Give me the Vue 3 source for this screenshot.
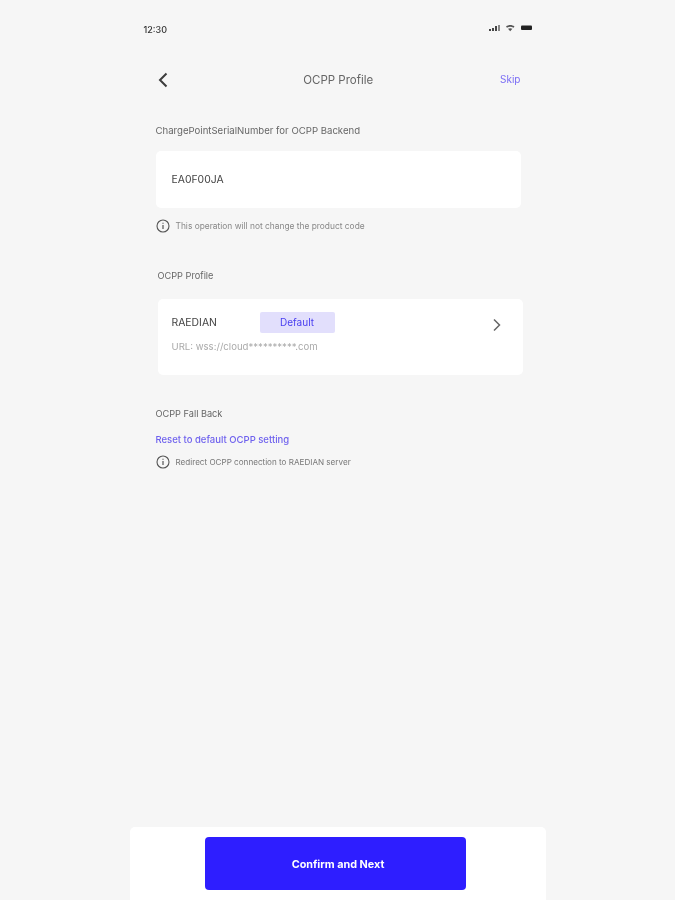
<template>
  <div class="page">
    <div class="screen">
      <div class="status">
        <span class="time">12:30</span>
        <svg class="status-icons" width="44" height="8" viewBox="0 0 44 8">
          <rect x="0" y="5" width="2" height="2" fill="#444" />
          <rect x="3" y="4" width="2" height="3" fill="#444" />
          <rect x="6" y="2" width="2" height="5" fill="#444" />
          <rect x="9" y="1" width="2" height="6" fill="#888" />
          <path d="M17 2.600c2.600-2 5.900-2 8.500 0l-1 1.200c-2-1.400-4.500-1.400-6.500 0zM19 4.800c1.400-.9 3-.9 4.400 0l-2.200 2.500z" fill="#555" />
          <rect x="32" y="1.500" width="11" height="4.500" rx="1" fill="#222" />
        </svg>
      </div>

      <div class="header">
        <svg class="back" width="12" height="18" viewBox="0 0 12 18">
          <path d="M9.500 2.500 3 9l6.500 6.500" fill="none" stroke="#3c3c3c" stroke-width="2" />
        </svg>
        <span class="title">OCPP Profile</span>
        <span class="skip">Skip</span>
      </div>

      <div class="label first-label">ChargePointSerialNumber for OCPP Backend</div>
      <div class="card serial">EA0F00JA</div>
      <div class="hint">
        <svg class="info" width="14" height="14" viewBox="0 0 14 14">
          <circle cx="7" cy="7" r="6" fill="none" stroke="#555" stroke-width="1.100" />
          <path d="M7 6v4M7 3.800v1" stroke="#555" stroke-width="1.200" />
        </svg>
        <span>This operation will not change the product code</span>
      </div>

      <div class="label profile-label">OCPP Profile</div>
      <div class="card profile">
        <div class="profile-top">
          <span class="name">RAEDIAN</span>
          <span class="badge">Default</span>
        </div>
        <div class="url">URL: wss://cloud**********.com</div>
        <svg class="chevron" width="10" height="14" viewBox="0 0 10 14">
          <path d="M2 1.500 7.500 7 2 12.500" fill="none" stroke="#666" stroke-width="1.500" />
        </svg>
      </div>

      <div class="label fallback-label">OCPP Fall Back</div>
      <div class="reset">Reset to default OCPP setting</div>
      <div class="hint hint-two">
        <svg class="info" width="14" height="14" viewBox="0 0 14 14">
          <circle cx="7" cy="7" r="6" fill="none" stroke="#555" stroke-width="1.100" />
          <path d="M7 6v4M7 3.800v1" stroke="#555" stroke-width="1.200" />
        </svg>
        <span>Redirect OCPP connection to RAEDIAN server</span>
      </div>
    </div>

    <div class="footer">
      <button class="confirm">Confirm and Next</button>
    </div>
  </div>
</template>

<script setup>
</script>

<style>
body {
  background: #f6f6f6;
}
</style>

<style scoped>
.page {
  height: 900px;
  background: #f6f6f6;
  display: flex;
  flex-direction: column;
  align-items: center;
  font-family: "Inter", "Liberation Sans", sans-serif;
  overflow: hidden;
  filter: blur(0.4px);
}

.screen {
  width: 416px;
  flex: 1;
  box-sizing: border-box;
  padding: 22px 0 0 26px;
}

.status {
  display: flex;
  justify-content: space-between;
  align-items: center;
  height: 14px;
  margin-left: -12px;
  padding-right: 13px;
}

.status-icons {
  margin-top: -2px;
}

.time {
  font-size: 9px;
  font-weight: 500;
  color: #333;
}

.header {
  display: flex;
  align-items: center;
  justify-content: space-between;
  height: 20px;
  margin-top: 34px;
  padding-right: 25px;
}

.back {
  margin-left: 1px;
}

.title {
  font-size: 11.500px;
  color: #666;
  margin-left: 8px;
}

.skip {
  font-size: 10px;
  color: #7a6cf5;
  margin-top: -2px;
}

.label {
  font-size: 9.200px;
  color: #666;
  height: 12px;
  line-height: 12px;
}

.first-label {
  font-size: 9.600px;
  margin-top: 35px;
}

.card {
  background: #fff;
  border-radius: 5px;
}

.serial {
  width: 365px;
  height: 57px;
  margin-top: 14px;
  box-sizing: border-box;
  padding-left: 16px;
  line-height: 57px;
  font-size: 10.400px;
  color: #444;
}

.hint {
  display: flex;
  align-items: center;
  gap: 6px;
  margin-top: 11px;
  font-size: 8.400px;
  color: #888;
  height: 14px;
}

.profile-label {
  margin-top: 37px;
  margin-left: 2px;
}

.profile {
  position: relative;
  width: 365px;
  height: 76px;
  margin-top: 17px;
  margin-left: 2px;
  box-sizing: border-box;
  padding: 13px 14px 0;
}

.profile-top {
  display: flex;
  align-items: center;
  height: 21px;
}

.name {
  width: 88px;
  font-size: 10.400px;
  color: #444;
}

.badge {
  width: 75px;
  height: 21px;
  line-height: 21px;
  text-align: center;
  background: #e2dffc;
  border-radius: 2px;
  font-size: 10px;
  color: #4a3ff0;
}

.url {
  margin-top: 8px;
  font-size: 9.600px;
  color: #aaa;
}

.chevron {
  position: absolute;
  right: 21px;
  top: 19px;
}

.fallback-label {
  margin-top: 33px;
}

.reset {
  margin-top: 14px;
  font-size: 9.500px;
  font-weight: 500;
  color: #6f62ee;
  height: 12px;
  line-height: 12px;
}

.hint-two {
  margin-top: 9px;
  font-size: 8.100px;
  color: #777;
}

.footer {
  width: 416px;
  height: 73px;
  background: #fff;
  border-radius: 5px 5px 0 0;
  box-sizing: border-box;
  padding: 10px 5px 0 0;
  display: flex;
  justify-content: center;
  margin-left: 1px;
}

.confirm {
  width: 261px;
  height: 53px;
  border: 0;
  border-radius: 4px;
  background: #2e1eff;
  color: #fff;
  font-family: inherit;
  font-size: 10.800px;
  font-weight: 700;
  padding: 2px 0 0 5px;
}
</style>
